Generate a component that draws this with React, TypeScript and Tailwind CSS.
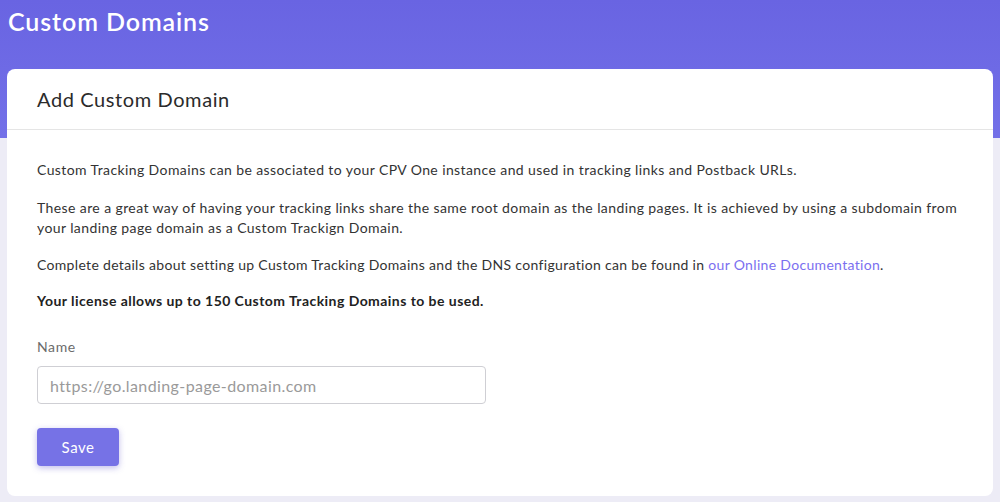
import React from 'react';

export default function App() {
  return (
    <div className="min-h-[502px] bg-[#edecf6] text-[#343a40]" style={{ fontFamily: 'Lato, "Open Sans", sans-serif' }}>
      <div className="h-[138px] bg-gradient-to-b from-[#6964e2] to-[#7370e8] px-2 pt-[5px]">
        <h1 className="text-[25px] leading-[32px] font-semibold tracking-[0.9px] text-white">Custom Domains</h1>
      </div>
      <div className="mx-[7px] -mt-[69px] rounded-lg bg-white">
        <div className="h-[61px] border-b border-[#e5e5e5] px-[30px] pt-[17px]">
          <h2 className="text-[20px] leading-[27px] tracking-[0.6px] text-[#2b2b2b]">Add Custom Domain</h2>
        </div>
        <div className="px-[30px] pt-[30px] pb-[30px] text-[14px] leading-[20px] tracking-[0.4px] text-[#333]">
          <p className="mb-[18px]">Custom Tracking Domains can be associated to your CPV One instance and used in tracking links and Postback URLs.</p>
          <p className="mb-[17px]">These are a great way of having your tracking links share the same root domain as the landing pages. It is achieved by using a subdomain from your landing page domain as a Custom Trackign Domain.</p>
          <p className="mb-[16px] tracking-[0.32px]">Complete details about setting up Custom Tracking Domains and the DNS configuration can be found in <a className="text-[#7b6ff0]" href="#">our Online Documentation</a>.</p>
          <p className="font-bold tracking-[0.45px] text-[#222]">Your license allows up to 150 Custom Tracking Domains to be used.</p>
          <label className="mt-[26px] block tracking-[0.6px] text-[#6b6b6b]">Name</label>
          <input
            className="mt-[9px] block h-[38px] w-[449px] rounded border border-[#cfcfd4] px-3 text-[16px] tracking-[0.4px] text-[#555] placeholder-[#9a9a9a] outline-none"
            placeholder="https://go.landing-page-domain.com"
          />
          <button className="mt-[24px] h-[38px] w-[82px] rounded bg-[#7672e6] text-[15px] tracking-[0.5px] text-white shadow-[0_2px_6px_rgba(80,70,200,0.35)]">Save</button>
        </div>
      </div>
    </div>
  );
}
